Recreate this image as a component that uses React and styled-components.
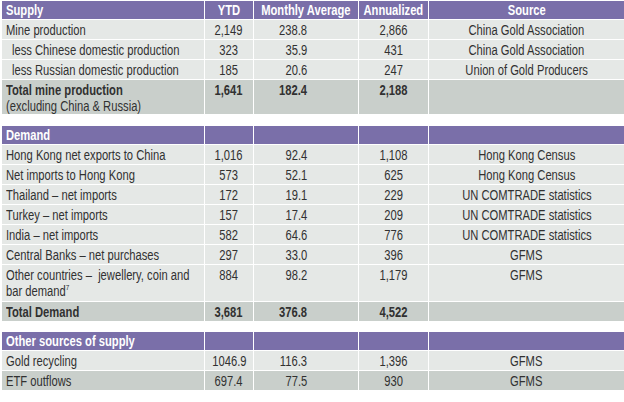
import React from 'react'
import styled, { createGlobalStyle } from 'styled-components'

const GlobalStyle = createGlobalStyle`
  body {
    margin: 0;
    background: #ffffff;
    font-family: "Liberation Sans", Arial, sans-serif;
  }
`

const Page = styled.div`
  padding: 1px 0 0 2px;
  width: 622px;
  display: flex;
  flex-direction: column;
  gap: 12px;
`

const Table = styled.div`
  display: grid;
  grid-template-columns: 202px 48px 104px 69px 195px;
  column-gap: 1px;
  row-gap: 1px;
  background: #ffffff;
  margin-top: ${p => p.$shift || 0}px;
`

const Cell = styled.div`
  display: flex;
  flex-direction: column;
  align-items: ${p => (p.$right ? 'flex-end' : p.$left ? 'flex-start' : 'center')};
  background: ${p => (p.$head ? '#7a6fa9' : p.$dark ? '#c9cfcb' : '#e5e8e6')};
  color: ${p => (p.$head ? '#ffffff' : '#313131')};
  font-size: 14px;
  font-weight: ${p => (p.$bold || p.$head ? 700 : 400)};
  line-height: 16px;
  height: ${p => p.$h || 19}px;
  padding: ${p => (p.$head ? '1px' : '2px')} ${p => (p.$right ? '51px' : '0')} 0 ${p => (p.$indent ? 10 : p.$left ? 4 : 0)}px;
  white-space: nowrap;
  box-sizing: border-box;
  overflow: hidden;
`

/* condensed face: the reference uses a narrow grotesque, so squeeze Arial metrics */
const T = styled.span`
  display: block;
  transform: scaleX(0.8);
  transform-origin: ${p => p.$origin || 'center'} top;
`

const Sub = styled.span`
  display: block;
  font-weight: 400;
`

const Sup = styled.sup`
  font-size: 8px;
  line-height: 0;
`

const Header = ({ title, cols }) => (
  <>
    <Cell $head $h={18} $left><T $origin="left">{title}</T></Cell>
    <Cell $head $h={18}><T>{cols ? 'YTD' : ''}</T></Cell>
    <Cell $head $h={18}><T>{cols ? 'Monthly Average' : ''}</T></Cell>
    <Cell $head $h={18}><T>{cols ? 'Annualized' : ''}</T></Cell>
    <Cell $head $h={18}><T>{cols ? 'Source' : ''}</T></Cell>
  </>
)

const Row = ({ r }) => (
  <>
    <Cell $left $indent={r.indent} $bold={r.bold} $dark={r.dark} $h={r.h}>
      <T $origin="left">{r.label}</T>
    </Cell>
    <Cell $bold={r.bold} $dark={r.dark} $h={r.h}><T>{r.ytd}</T></Cell>
    <Cell $right $bold={r.bold} $dark={r.dark} $h={r.h}><T $origin="right">{r.avg}</T></Cell>
    <Cell $bold={r.bold} $dark={r.dark} $h={r.h}><T>{r.ann}</T></Cell>
    <Cell $dark={r.dark} $h={r.h}><T>{r.src}</T></Cell>
  </>
)

const supply = [
  { label: 'Mine production', ytd: '2,149', avg: '238.8', ann: '2,866', src: 'China Gold Association' },
  { label: 'less Chinese domestic production', indent: true, ytd: '323', avg: '35.9', ann: '431', src: 'China Gold Association' },
  { label: 'less Russian domestic production', indent: true, ytd: '185', avg: '20.6', ann: '247', src: 'Union of Gold Producers' },
  {
    label: <>Total mine production<Sub>(excluding China &amp; Russia)</Sub></>,
    bold: true, dark: true, h: 34, ytd: '1,641', avg: '182.4', ann: '2,188', src: '',
  },
]

const demand = [
  { label: 'Hong Kong net exports to China', ytd: '1,016', avg: '92.4', ann: '1,108', src: 'Hong Kong Census' },
  { label: 'Net imports to Hong Kong', ytd: '573', avg: '52.1', ann: '625', src: 'Hong Kong Census' },
  { label: 'Thailand – net imports', ytd: '172', avg: '19.1', ann: '229', src: 'UN COMTRADE statistics' },
  { label: 'Turkey – net imports', ytd: '157', avg: '17.4', ann: '209', src: 'UN COMTRADE statistics' },
  { label: 'India – net imports', ytd: '582', avg: '64.6', ann: '776', src: 'UN COMTRADE statistics' },
  { label: 'Central Banks – net purchases', ytd: '297', avg: '33.0', ann: '396', src: 'GFMS' },
  {
    label: <>Other countries –&nbsp; jewellery, coin and<Sub>bar demand<Sup>7</Sup></Sub></>,
    h: 36, ytd: '884', avg: '98.2', ann: '1,179', src: 'GFMS',
  },
  { label: 'Total Demand', bold: true, dark: true, ytd: '3,681', avg: '376.8', ann: '4,522', src: '' },
]

const other = [
  { label: 'Gold recycling', ytd: '1046.9', avg: '116.3', ann: '1,396', src: 'GFMS' },
  { label: 'ETF outflows', dark: true, ytd: '697.4', avg: '77.5', ann: '930', src: 'GFMS' },
]

export default function App() {
  return (
    <>
      <GlobalStyle />
      <Page>
        <Table>
          <Header title="Supply" cols />
          {supply.map((r, i) => <Row key={i} r={r} />)}
        </Table>
        <Table>
          <Header title="Demand" />
          {demand.map((r, i) => <Row key={i} r={r} />)}
        </Table>
        <Table $shift={-1}>
          <Header title="Other sources of supply" />
          {other.map((r, i) => <Row key={i} r={r} />)}
        </Table>
      </Page>
    </>
  )
}
